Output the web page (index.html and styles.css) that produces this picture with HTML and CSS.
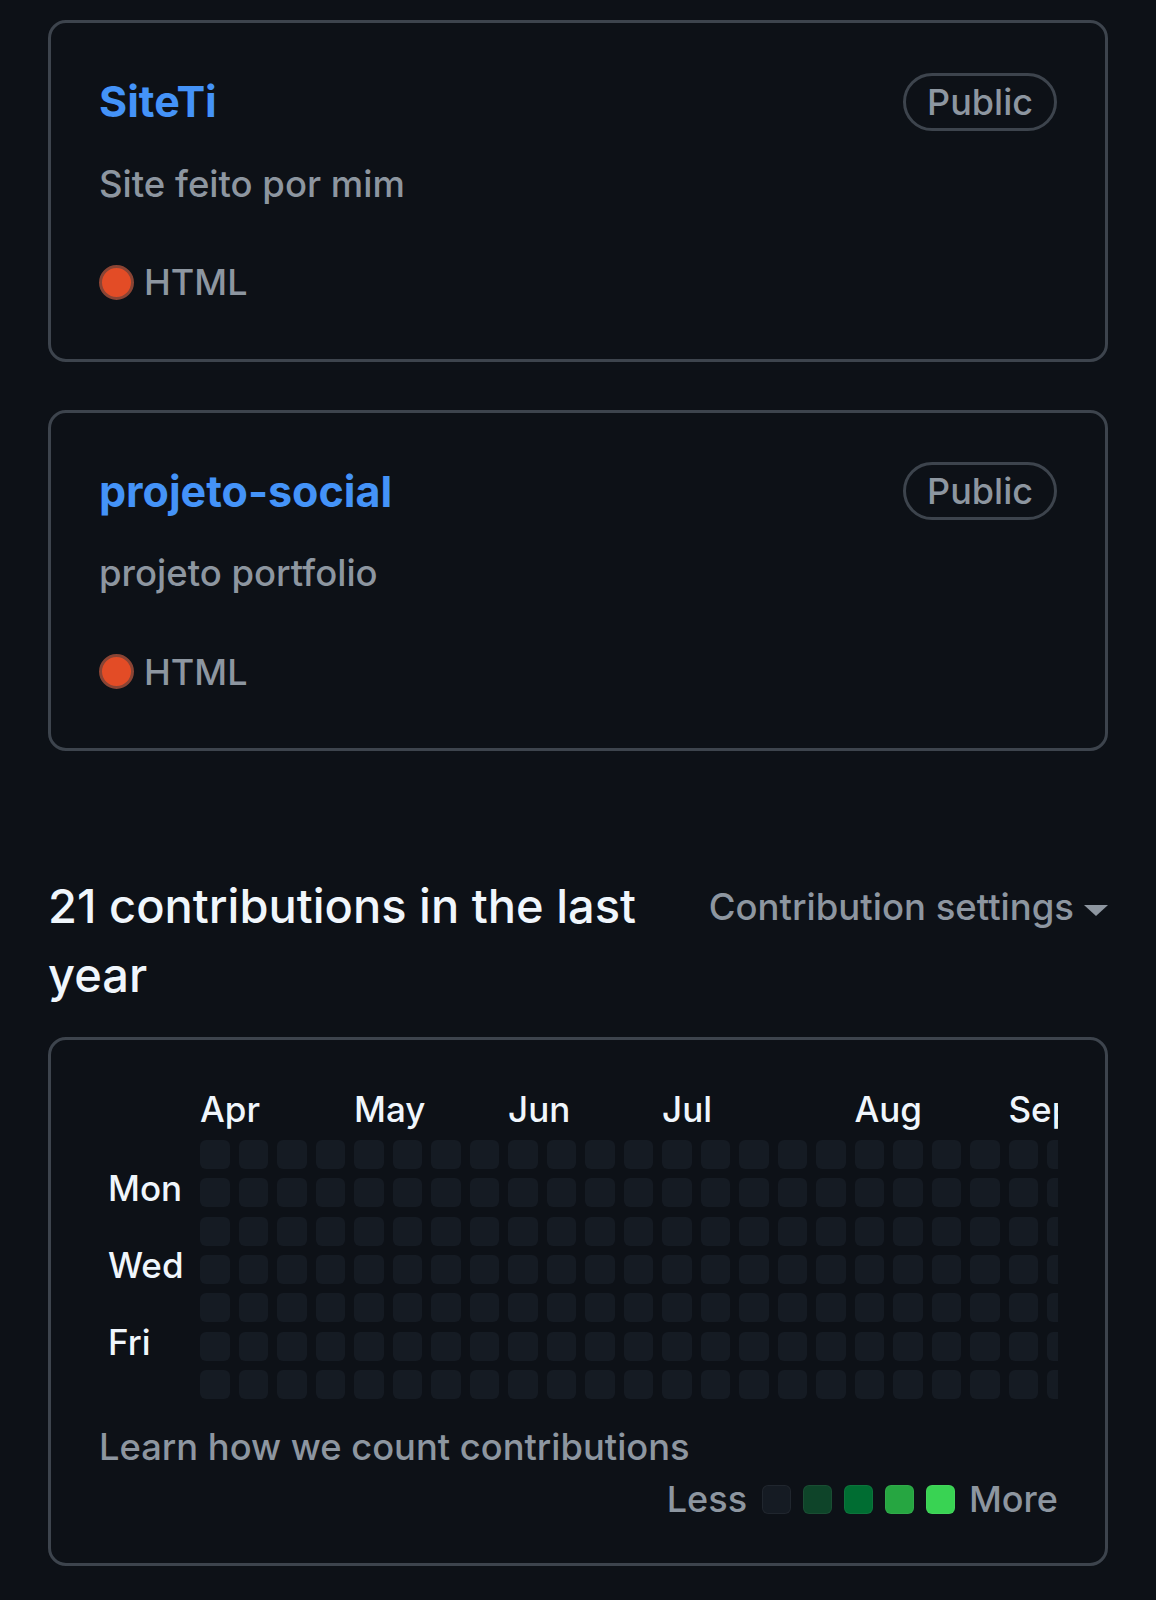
FILE: index.html
```html
<!DOCTYPE html>
<html lang="en">
<head>
<meta charset="utf-8">
<title>Profile</title>
<link rel="stylesheet" href="styles.css">
</head>
<body>
<main class="page">
  <section class="pinned">
    <article class="card">
      <div class="card-head">
        <a class="repo">SiteTi</a>
        <span class="label">Public</span>
      </div>
      <p class="desc">Site feito por mim</p>
      <p class="lang"><span class="dot"></span><span>HTML</span></p>
    </article>
    <article class="card">
      <div class="card-head">
        <a class="repo">projeto-social</a>
        <span class="label">Public</span>
      </div>
      <p class="desc">projeto portfolio</p>
      <p class="lang"><span class="dot"></span><span>HTML</span></p>
    </article>
  </section>

  <section class="contrib">
    <div class="contrib-head">
      <h2>21 contributions in the last year</h2>
      <div class="settings">Contribution settings<span class="caret"></span></div>
    </div>
    <div class="cal-box">
      <div class="graph">
        <div class="days">
          <span class="day d-mon">Mon</span>
          <span class="day d-wed">Wed</span>
          <span class="day d-fri">Fri</span>
        </div>
        <div class="weeks">
          <div class="months">
            <span class="m-apr">Apr</span>
            <span class="m-may">May</span>
            <span class="m-jun">Jun</span>
            <span class="m-jul">Jul</span>
            <span class="m-aug">Aug</span>
            <span class="m-sep">Sep</span>
          </div>
          <div class="cells">
<i></i><i></i><i></i><i></i><i></i><i></i><i></i>
<i></i><i></i><i></i><i></i><i></i><i></i><i></i>
<i></i><i></i><i></i><i></i><i></i><i></i><i></i>
<i></i><i></i><i></i><i></i><i></i><i></i><i></i>
<i></i><i></i><i></i><i></i><i></i><i></i><i></i>
<i></i><i></i><i></i><i></i><i></i><i></i><i></i>
<i></i><i></i><i></i><i></i><i></i><i></i><i></i>
<i></i><i></i><i></i><i></i><i></i><i></i><i></i>
<i></i><i></i><i></i><i></i><i></i><i></i><i></i>
<i></i><i></i><i></i><i></i><i></i><i></i><i></i>
<i></i><i></i><i></i><i></i><i></i><i></i><i></i>
<i></i><i></i><i></i><i></i><i></i><i></i><i></i>
<i></i><i></i><i></i><i></i><i></i><i></i><i></i>
<i></i><i></i><i></i><i></i><i></i><i></i><i></i>
<i></i><i></i><i></i><i></i><i></i><i></i><i></i>
<i></i><i></i><i></i><i></i><i></i><i></i><i></i>
<i></i><i></i><i></i><i></i><i></i><i></i><i></i>
<i></i><i></i><i></i><i></i><i></i><i></i><i></i>
<i></i><i></i><i></i><i></i><i></i><i></i><i></i>
<i></i><i></i><i></i><i></i><i></i><i></i><i></i>
<i></i><i></i><i></i><i></i><i></i><i></i><i></i>
<i></i><i></i><i></i><i></i><i></i><i></i><i></i>
<i></i><i></i><i></i><i></i><i></i><i></i><i></i>
          </div>
        </div>
      </div>
      <p class="learn">Learn how we count contributions</p>
      <div class="legend">
        <span class="less">Less</span>
        <i class="sq l0"></i>
        <i class="sq l1"></i>
        <i class="sq l2"></i>
        <i class="sq l3"></i>
        <i class="sq l4"></i>
        <span class="more">More</span>
      </div>
    </div>
  </section>
</main>
</body>
</html>
```

FILE: styles.css
```css
* { box-sizing: border-box; }

body {
  margin: 0;
  background: #0d1117;
  color: #e6edf3;
  font-family: Inter, "Noto Sans", sans-serif;
}

.page {
  padding: 20px 48px 36px;
}

.pinned {
  display: flex;
  flex-direction: column;
  gap: 48px;
}

.card {
  border: 3px solid #3d444d;
  border-radius: 18px;
  padding: 48px 48px 50px;
}

.card-head {
  display: flex;
  justify-content: space-between;
  align-items: center;
}

.repo {
  font-size: 43px;
  font-weight: 700;
  line-height: 61.5px;
  color: #4493f8;
}

.label {
  font-size: 36px;
  font-weight: 500;
  line-height: 52px;
  padding: 0 21px;
  border: 3px solid #3d444d;
  border-radius: 999px;
  color: #8d96a0;
}

.desc {
  margin: 25px 0 46px;
  font-size: 36.5px;
  font-weight: 500;
  line-height: 52.5px;
  color: #8d96a0;
}

.lang {
  margin: 0;
  display: flex;
  align-items: center;
  gap: 10px;
  font-size: 36px;
  font-weight: 500;
  line-height: 52.5px;
  color: #8d96a0;
}

.dot {
  width: 35px;
  height: 35px;
  border-radius: 50%;
  background: #e34c26;
  border: 3px solid #8a4434;
}

.contrib {
  margin-top: 120px;
}

.contrib-head {
  display: flex;
  align-items: flex-start;
  gap: 20px;
}

.contrib-head h2 {
  flex: 1;
  margin: 0;
  font-size: 47px;
  font-weight: 500;
  line-height: 69px;
  color: #f0f6fc;
}

.settings {
  flex: none;
  margin-top: 10px;
  display: flex;
  align-items: center;
  gap: 10px;
  font-size: 36.5px;
  font-weight: 500;
  line-height: 52.5px;
  color: #8d96a0;
  white-space: nowrap;
}

.caret {
  margin-top: 6px;
  border-left: 12px solid transparent;
  border-right: 12px solid transparent;
  border-top: 11px solid #8d96a0;
}

.cal-box {
  margin-top: 28px;
  border: 3px solid #3d444d;
  border-radius: 18px;
  padding: 49px 47px 37px 48px;
}

.graph {
  display: flex;
}

.days {
  flex: none;
  width: 101px;
  padding-left: 9px;
  padding-top: 51px;
  display: grid;
  grid-template-rows: repeat(7, 29px);
  row-gap: 9.33px;
}

.day {
  font-size: 35px;
  font-weight: 500;
  line-height: 21px;
  color: #f0f6fc;
  white-space: nowrap;
}

.d-mon { grid-row: 2; }
.d-wed { grid-row: 4; }
.d-fri { grid-row: 6; }

.weeks {
  flex: 1;
  min-width: 0;
  overflow: hidden;
}

.months {
  display: grid;
  grid-template-columns: repeat(23, 29.5px);
  column-gap: 9px;
  height: 40px;
  margin-bottom: 11px;
  font-size: 35px;
  font-weight: 500;
  line-height: 40px;
  color: #f0f6fc;
}

.months span { white-space: nowrap; grid-row: 1; }
.m-apr { grid-column: 1 / span 4; }
.m-may { grid-column: 5 / span 4; }
.m-jun { grid-column: 9 / span 4; }
.m-jul { grid-column: 13 / span 5; }
.m-aug { grid-column: 18 / span 4; }
.m-sep { grid-column: 22 / span 2; }

.cells {
  display: grid;
  grid-auto-flow: column;
  grid-template-rows: repeat(7, 29px);
  grid-auto-columns: 29.5px;
  gap: 9.33px 9px;
}

.cells i {
  display: block;
  background: #151b23;
  border-radius: 6px;
}

.learn {
  margin: 22px 0 0;
  font-size: 36.3px;
  font-weight: 500;
  line-height: 52.5px;
  color: #8d96a0;
}

.legend {
  display: flex;
  justify-content: flex-end;
  align-items: center;
  gap: 12px;
  font-size: 36px;
  font-weight: 500;
  line-height: 52.5px;
  color: #8d96a0;
}

.less { margin-right: 3px; }
.more { margin-left: 2px; }

.sq {
  display: block;
  width: 29px;
  height: 29px;
  border-radius: 6px;
  box-shadow: inset 0 0 0 1px rgba(255, 255, 255, 0.05);
}

.l0 { background: #151b23; }
.l1 { background: #0e4429; }
.l2 { background: #006d32; }
.l3 { background: #26a641; }
.l4 { background: #39d353; }
```
